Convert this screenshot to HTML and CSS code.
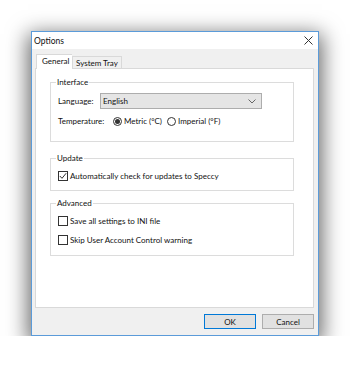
FILE: index.html
```html
<!DOCTYPE html>
<html>
  <head>
    <meta charset="utf-8" />
    <title>Options</title>
    <link rel="stylesheet" href="styles.css">
  </head>
  <body>
    <div class="window">
      <div class="title-bar">
        <div class="title">Options</div>
        <div class="close">
          <svg width="9" height="9" viewBox="0 0 9 9"><path d="M0.5 0.5L8.5 8.5M8.5 0.5L0.5 8.5" stroke="#333" stroke-width="1" fill="none"/></svg>
        </div>
      </div>
      <div class="content">
        <div class="tabs">
          <div class="tab selected">General</div>
          <div class="tab">System Tray</div>
        </div>
        <div class="panel">
          <div class="group group-interface">
            <span class="group-title">Interface</span>
            <div class="row row-language">
              <span class="label">Language:</span>
              <div class="select">
                <span>English</span>
                <svg width="8" height="5" viewBox="0 0 8 5"><path d="M0.5 0.5L4 4L7.5 0.5" stroke="#666" stroke-width="1" fill="none"/></svg>
              </div>
            </div>
            <div class="row row-temp">
              <span class="label">Temperature:</span>
              <span class="radio checked"></span><span class="option">Metric (°C)</span>
              <span class="radio"></span><span class="option">Imperial (°F)</span>
            </div>
          </div>

          <div class="group group-update">
            <span class="group-title">Update</span>
            <div class="check-row">
              <span class="checkbox checked">
                <svg width="8" height="8" viewBox="0 0 8 8"><path d="M0.8 4L3 6.3L7.2 1.2" stroke="#333" stroke-width="1" fill="none"/></svg>
              </span>
              <span>Automatically check for updates to Speccy</span>
            </div>
          </div>

          <div class="group group-advanced">
            <span class="group-title">Advanced</span>
            <div class="check-row">
              <span class="checkbox"></span>
              <span>Save all settings to INI file</span>
            </div>
            <div class="check-row">
              <span class="checkbox"></span>
              <span>Skip User Account Control warning</span>
            </div>
          </div>
        </div>
        <div class="footer">
          <button class="btn default">OK</button>
          <button class="btn">Cancel</button>
        </div>
      </div>
    </div>
  </body>
</html>
```

FILE: styles.css
```css
body {
  margin: 0;
  background-color: #ffffff;
  font-family: Lato, "Noto Sans", sans-serif;
  font-size: 8px;
  color: #111111;
}

.window {
  margin-left: 31px;
  margin-top: 31px;
  width: 288px;
  height: 305px;
  box-sizing: border-box;
  border: 1px solid #5b9bd9;
  background-color: #f0f0f0;
  display: flex;
  flex-direction: column;
  box-shadow: 0 6px 20px 3px rgba(0, 0, 0, 0.6);
}

.title-bar {
  height: 17px;
  flex: none;
  background-color: #ffffff;
  display: flex;
  align-items: center;
  padding: 0 5px 0 2px;
}

.title {
  flex: 1;
  font-size: 8.5px;
}

.close {
  display: flex;
}

.content {
  flex: 1;
  display: flex;
  flex-direction: column;
  padding: 4px 4px 0 3px;
}

.tabs {
  display: flex;
  align-items: flex-end;
  height: 15px;
  padding-left: 1px;
}

.tab {
  height: 12px;
  line-height: 12px;
  padding: 0 3px;
  border: 1px solid #d9d9d9;
  border-bottom: none;
  box-sizing: border-box;
  background-color: #f0f0f0;
}

.tab.selected {
  width: 36px;
  height: 15px;
  line-height: 13px;
  background-color: #ffffff;
  border-right: none;
  padding: 0 0 0 5px;
  position: relative;
  top: 1px;
}

.panel {
  height: 240px;
  box-sizing: border-box;
  background-color: #ffffff;
  border: 1px solid #d9d9d9;
  padding: 13px 19px 0 14px;
}

.group {
  border: 1px solid #dcdcdc;
  padding: 0 7px;
  box-sizing: border-box;
  display: flex;
  flex-direction: column;
  align-items: flex-start;
}

.group-title {
  margin-top: -6px;
  margin-left: -2px;
  padding: 0 1px;
  line-height: 11px;
  background-color: #ffffff;
}

.group-interface {
  height: 60px;
}

.group-update {
  margin-top: 16px;
  height: 33px;
}

.group-advanced {
  margin-top: 12px;
  height: 53px;
}

.row {
  display: flex;
  align-items: center;
}

.row-language {
  margin-top: 5px;
  height: 16px;
}

.row-language .label {
  width: 42px;
}

.row-temp {
  margin-top: 6px;
  height: 12px;
}

.row-temp .label {
  width: 55px;
}

.select {
  width: 162px;
  height: 16px;
  box-sizing: border-box;
  border: 1px solid #adadad;
  background-color: #e5e5e5;
  display: flex;
  align-items: center;
  justify-content: space-between;
  padding: 0 5px 0 2px;
}

.radio {
  width: 9px;
  height: 9px;
  border: 1px solid #333;
  border-radius: 50%;
  box-sizing: border-box;
  margin-right: 2px;
  display: inline-flex;
  align-items: center;
  justify-content: center;
}

.radio.checked::after {
  content: "";
  width: 5px;
  height: 5px;
  border-radius: 50%;
  background-color: #333;
}

.option {
  margin-right: 5px;
}

.check-row {
  display: flex;
  align-items: center;
  height: 11px;
  margin-top: 6px;
}

.check-row + .check-row {
  margin-top: 8px;
}

.checkbox {
  width: 10px;
  height: 10px;
  border: 1px solid #333;
  box-sizing: border-box;
  margin-right: 2px;
  display: flex;
  align-items: center;
  justify-content: center;
}

.footer {
  flex: 1;
  display: flex;
  justify-content: flex-end;
  align-items: center;
  gap: 6px;
}

.btn {
  width: 52px;
  height: 15px;
  padding: 0;
  font-family: inherit;
  font-size: 8px;
  color: #111111;
  background-color: #e1e1e1;
  border: 1px solid #adadad;
}

.btn.default {
  border: 1px solid #0078d7;
}
```
